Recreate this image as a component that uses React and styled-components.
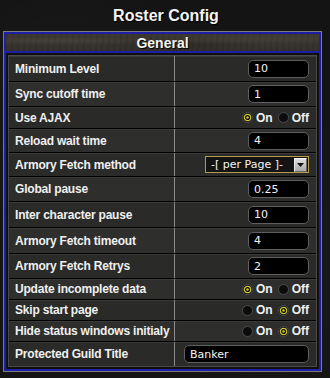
import React from 'react';
import styled, { createGlobalStyle } from 'styled-components';

const GlobalStyle = createGlobalStyle`
    html, body {
        margin: 0;
        padding: 0;
        background-color: #141414;
        background-image:
            radial-gradient(circle at 20% 30%, rgba(255,255,255,0.03) 0, transparent 40%),
            radial-gradient(circle at 80% 70%, rgba(255,255,255,0.025) 0, transparent 45%);
        font-family: "Liberation Sans", Arial, sans-serif;
        color: #f2f2f2;
    }
`;

const Page = styled.div`
    width: 330px;
    height: 378px;
    overflow: hidden;
`;

const Title = styled.h1`
    margin: 0;
    height: 31px;
    display: flex;
    align-items: center;
    justify-content: center;
    padding-left: 2px;
    font-size: 16px;
    font-weight: bold;
    color: #f4f4f4;
    text-shadow: 1px 1px 1px #000;
`;

const Frame = styled.div`
    margin: 0 3px;
    width: 317px;
    border: 1px solid #7c7c7c;
`;

const Box = styled.div`
    border: 2px solid #1e1ea6;
    background: #101010;
`;

const Header = styled.div`
    height: 17px;
    display: flex;
    align-items: center;
    justify-content: center;
    border-bottom: 2px solid #1e1ea6;
    font-size: 14px;
    font-weight: bold;
    color: #f4f4f4;
    text-shadow: 1px 1px 1px #000;
    background:
        radial-gradient(ellipse at 15% 40%, rgba(255,255,255,0.06) 0, transparent 30%),
        radial-gradient(ellipse at 55% 70%, rgba(0,0,0,0.15) 0, transparent 35%),
        radial-gradient(ellipse at 85% 30%, rgba(255,255,255,0.05) 0, transparent 30%),
        repeating-linear-gradient(95deg, rgba(0,0,0,0.08) 0 2px, transparent 2px 6px),
        linear-gradient(180deg, #3d3832, #34302b);
`;

const Body = styled.div`
    padding: 2px;
`;

const Table = styled.div`
    border: 1px solid #4a4a4a;
    background: #2a2a2a;
`;

const Row = styled.div`
    box-sizing: border-box;
    display: grid;
    grid-template-columns: 166px 1fr;
    height: ${p => p.h}px;
    border-bottom: 1px solid #000;
    background: ${p => (p.alt ? '#2e2e2d' : '#2a2a29')};
    box-shadow: inset 0 1px 0 #3a3a39;

    &:last-child {
        border-bottom: none;
    }
`;

const Label = styled.div`
    display: flex;
    align-items: center;
    padding-left: 6px;
    border-right: 1px solid #8a8a8a;
    font-size: 12px;
    font-weight: bold;
    letter-spacing: -0.2px;
    color: #f0f0f0;
    white-space: nowrap;
`;

const Value = styled.div`
    display: flex;
    align-items: center;
    justify-content: flex-end;
    padding-right: 7px;
`;

const TextInput = styled.div`
    box-sizing: border-box;
    width: ${p => (p.wide ? '125px' : '61px')};
    height: 18px;
    display: flex;
    align-items: center;
    padding-left: 5px;
    background: #000;
    border: 1px solid #5e5e5e;
    border-radius: 5px;
    font-family: "DejaVu Sans", Verdana, sans-serif;
    font-size: 11px;
    color: #f4f4f4;
`;

const Select = styled.div`
    box-sizing: border-box;
    width: 104px;
    height: 17px;
    display: flex;
    align-items: center;
    justify-content: space-between;
    padding: 0 1px 0 5px;
    background: #141414;
    border: 1px solid #b49a4a;
    font-family: "DejaVu Sans", Verdana, sans-serif;
    font-size: 11px;
    color: #f4f4f4;
    white-space: pre;
`;

const SelectButton = styled.span`
    width: 11px;
    height: 12px;
    display: flex;
    align-items: center;
    justify-content: center;
    background: linear-gradient(180deg, #e0e0e0, #a8a8a8);
    border: 1px solid #eee;
    border-right-color: #666;
    border-bottom-color: #666;
`;

const RadioGroup = styled.div`
    display: flex;
    align-items: center;
    gap: 5px;
`;

const RadioItem = styled.span`
    display: flex;
    align-items: center;
    gap: 3px;
    font-size: 12px;
    font-weight: bold;
    color: #f0f0f0;
`;

const Radio = ({ checked }) => (
    <svg width="11" height="11" viewBox="0 0 11 11">
        <circle cx="5.5" cy="5.5" r="5" fill="#0c0c0c" stroke="#4c4c4c" strokeWidth="1" />
        {checked && (
            <>
                <circle cx="5.5" cy="5.5" r="3.2" fill="none" stroke="#cfc536" strokeWidth="1.2" />
                <circle cx="5.5" cy="5.5" r="1.3" fill="#cfc536" />
            </>
        )}
    </svg>
);

const OnOff = ({ on }) => (
    <RadioGroup>
        <RadioItem><Radio checked={on} />On</RadioItem>
        <RadioItem><Radio checked={!on} />Off</RadioItem>
    </RadioGroup>
);

const rows = [
    { label: 'Minimum Level', type: 'text', value: '10', h: 26 },
    { label: 'Sync cutoff time', type: 'text', value: '1', h: 25 },
    { label: 'Use AJAX', type: 'radio', on: true, h: 22 },
    { label: 'Reload wait time', type: 'text', value: '4', h: 24 },
    { label: 'Armory Fetch method', type: 'select', value: '-[ per Page ]-', h: 24 },
    { label: 'Global pause', type: 'text', value: '0.25', h: 25 },
    { label: 'Inter character pause', type: 'text', value: '10', h: 26 },
    { label: 'Armory Fetch timeout', type: 'text', value: '4', h: 26 },
    { label: 'Armory Fetch Retrys', type: 'text', value: '2', h: 25 },
    { label: 'Update incomplete data', type: 'radio', on: true, h: 21 },
    { label: 'Skip start page', type: 'radio', on: false, h: 21 },
    { label: 'Hide status windows initialy', type: 'radio', on: false, h: 21 },
    { label: 'Protected Guild Title', type: 'wide', value: 'Banker', h: 24 },
];

const App = () => {
    return (
        <>
            <GlobalStyle />
            <Page>
                <Title>Roster Config</Title>
                <Frame>
                    <Box>
                        <Header>General</Header>
                        <Body>
                            <Table>
                                {rows.map((r, i) => (
                                    <Row key={r.label} h={r.h} alt={i % 2 === 1}>
                                        <Label>{r.label}</Label>
                                        <Value>
                                            {r.type === 'text' && <TextInput>{r.value}</TextInput>}
                                            {r.type === 'wide' && <TextInput wide>{r.value}</TextInput>}
                                            {r.type === 'radio' && <OnOff on={r.on} />}
                                            {r.type === 'select' && (
                                                <Select>
                                                    {r.value}
                                                    <SelectButton>
                                                        <svg width="7" height="4" viewBox="0 0 7 4">
                                                            <path d="M0 0 H7 L3.5 4 Z" fill="#111" />
                                                        </svg>
                                                    </SelectButton>
                                                </Select>
                                            )}
                                        </Value>
                                    </Row>
                                ))}
                            </Table>
                        </Body>
                    </Box>
                </Frame>
            </Page>
        </>
    );
};

export default App;
